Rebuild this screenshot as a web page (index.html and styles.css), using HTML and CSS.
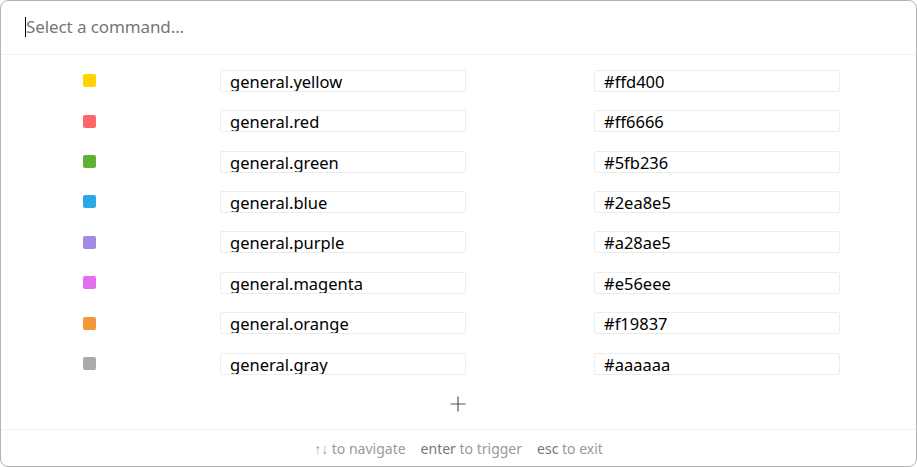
FILE: index.html
```html
<!DOCTYPE html>
<html>
<head>
<meta charset="utf-8">
<link rel="stylesheet" href="styles.css">
</head>
<body>
<div class="window">
  <div class="header">
    <span class="caret"></span><span class="placeholder">Select a command...</span>
  </div>
  <div class="list">
    <div class="row"><span class="swatch" style="background:#ffd400"></span><div class="field name">general.yellow</div><div class="field hex">#ffd400</div></div>
    <div class="row"><span class="swatch" style="background:#ff6666"></span><div class="field name">general.red</div><div class="field hex">#ff6666</div></div>
    <div class="row"><span class="swatch" style="background:#5fb236"></span><div class="field name">general.green</div><div class="field hex">#5fb236</div></div>
    <div class="row"><span class="swatch" style="background:#2ea8e5"></span><div class="field name">general.blue</div><div class="field hex">#2ea8e5</div></div>
    <div class="row"><span class="swatch" style="background:#a28ae5"></span><div class="field name">general.purple</div><div class="field hex">#a28ae5</div></div>
    <div class="row"><span class="swatch" style="background:#e56eee"></span><div class="field name">general.magenta</div><div class="field hex">#e56eee</div></div>
    <div class="row"><span class="swatch" style="background:#f19837"></span><div class="field name">general.orange</div><div class="field hex">#f19837</div></div>
    <div class="row"><span class="swatch" style="background:#aaaaaa"></span><div class="field name">general.gray</div><div class="field hex">#aaaaaa</div></div>
    <div class="add">
      <svg width="16" height="16" viewBox="0 0 16 16"><path d="M8 0.5V15.5M0.5 8H15.5" stroke="#555" stroke-width="1.2" fill="none"/></svg>
    </div>
  </div>
  <div class="footer">
    <span class="hint"><span class="arrows">↑↓</span> to navigate</span>
    <span class="hint"><span class="key">enter</span> to trigger</span>
    <span class="hint"><span class="key">esc</span> to exit</span>
  </div>
</div>
</body>
</html>
```
FILE: styles.css
```css
html, body {
  margin: 0;
  padding: 0;
  background: #ffffff;
}
body {
  font-family: "Noto Sans", "Open Sans", sans-serif;
}
.window {
  box-sizing: border-box;
  width: 917px;
  height: 467px;
  border: 1px solid #b4b4b4;
  border-radius: 8px;
  background: #fff;
  display: flex;
  flex-direction: column;
  overflow: hidden;
}
.header {
  box-sizing: border-box;
  height: 54px;
  border-bottom: 1px solid #f0f0f0;
  display: flex;
  align-items: center;
  padding-left: 24px;
  padding-bottom: 2px;
  flex: none;
}
.caret {
  width: 1px;
  height: 20px;
  background: #000;
}
.placeholder {
  font-size: 17px;
  color: #777;
  letter-spacing: -0.1px;
}
.list {
  flex: 1;
  padding-top: 5.6px;
  display: flex;
  flex-direction: column;
}
.row {
  height: 40.4px;
  display: flex;
  align-items: center;
  padding-left: 82px;
}
.swatch {
  width: 13px;
  height: 13px;
  border-radius: 2px;
  flex: none;
}
.field {
  box-sizing: border-box;
  width: 246px;
  height: 22px;
  border: 1px solid #ececec;
  border-radius: 2px;
  padding-left: 9px;
  font-size: 16.5px;
  line-height: 22px;
  color: #000;
  overflow: hidden;
  white-space: nowrap;
}
.name {
  margin-left: 124px;
}
.hex {
  margin-left: 128px;
}
.add {
  display: flex;
  justify-content: center;
  padding-top: 12px;
  padding-right: 2px;
}
.footer {
  box-sizing: border-box;
  height: 37px;
  border-top: 1px solid #f0f0f0;
  display: flex;
  justify-content: center;
  align-items: center;
  gap: 15px;
  font-size: 14px;
  color: #999;
  flex: none;
}
.arrows {
  color: #a9a0b4;
}
.key {
  color: #777;
}
```
